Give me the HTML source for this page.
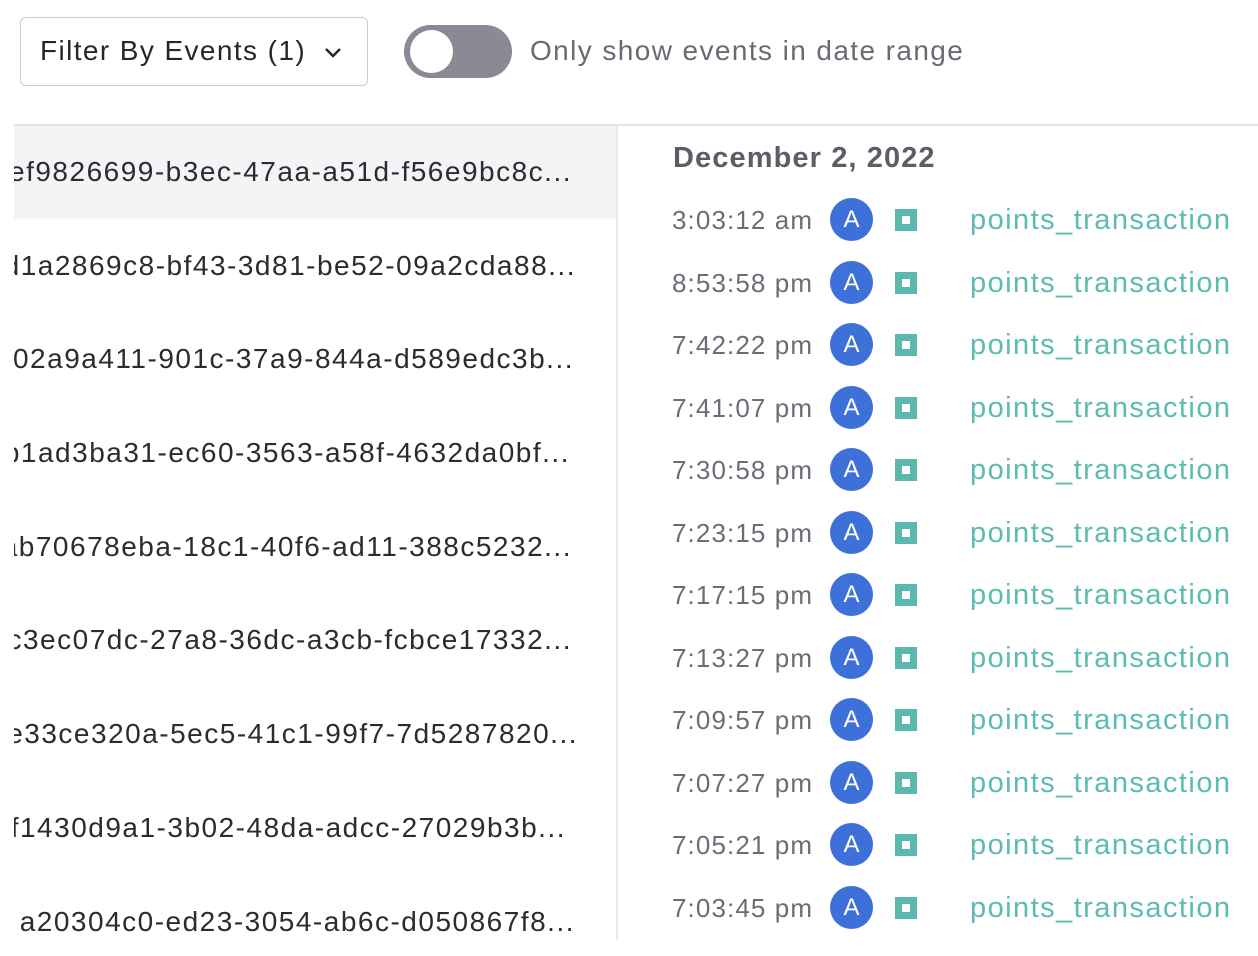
<!DOCTYPE html>
<html><head><meta charset="utf-8"><style>
body{margin:0;width:1258px;height:956px;background:#fff;font-family:"Liberation Sans",sans-serif;position:relative;overflow:hidden}
.btn{position:absolute;left:20px;top:17px;width:348px;height:69px;border:1.5px solid #c9cbd0;border-radius:6px;box-sizing:border-box}
.btn span{position:absolute;left:19px;top:17px;font-size:28px;color:#25272c;letter-spacing:1.4px;white-space:nowrap}
.btn svg{position:absolute;left:302px;top:28px}
.tog{position:absolute;left:404px;top:25px;width:108px;height:53px;border-radius:27px;background:#898a93}
.tog i{position:absolute;left:6px;top:5px;width:43px;height:43px;border-radius:50%;background:#fff}
.lbl{position:absolute;left:530px;top:35px;font-size:28px;color:#686b74;letter-spacing:1.4px;white-space:nowrap}
.hl{position:absolute;left:14px;top:124px;width:1244px;height:2px;background:#e3e4e8}
.vl{position:absolute;left:616px;top:124px;width:2px;height:816px;background:#e8e9ec}
.left{position:absolute;left:14px;top:126px;width:602px;height:830px;overflow:hidden}
.row{position:absolute;left:0;width:602px;height:93px}
.row span{position:absolute;right:44px;font-size:28px;color:#2a2c31;white-space:nowrap;letter-spacing:1.5px}
.date{position:absolute;left:673px;top:142px;font-size:29px;font-weight:bold;color:#5b5e67;letter-spacing:1.1px}
.ev{position:absolute;left:0;width:1258px;height:44px}
.ev .t{position:absolute;left:672px;top:7px;font-size:26px;color:#6a6d76;letter-spacing:1.1px}
.ev .a{position:absolute;left:830px;top:0;width:43px;height:43px;border-radius:50%;background:#3e70da;color:#fff;font-size:24px;text-align:center;line-height:43px}
.ev .s{position:absolute;left:895px;top:11px;width:22px;height:22px;background:#5ab8ae}
.ev .s i{position:absolute;left:7px;top:7px;width:8px;height:8px;background:#fff}
.ev .n{position:absolute;left:970px;top:6px;font-size:29px;color:#5cbcb1;letter-spacing:1.45px;white-space:nowrap}
</style></head><body>
<div class="btn"><span>Filter By Events (1)</span><svg width="20" height="14" viewBox="0 0 20 14"><path d="M3 3 L10 10 L17 3" fill="none" stroke="#25272c" stroke-width="2.5"/></svg></div>
<div class="tog"><i></i></div>
<div class="lbl">Only show events in date range</div>
<div class="hl"></div>
<div class="vl"></div>
<div class="left">
<div class="row" style="top:0;background:#f3f4f6"><span style="top:30px">ef9826699-b3ec-47aa-a51d-f56e9bc8c...</span></div>
<div class="row" style="top:94px"><span style="top:30px;right:40px">d1a2869c8-bf43-3d81-be52-09a2cda88...</span></div>
<div class="row" style="top:187px"><span style="top:30px;right:42px">5e02a9a411-901c-37a9-844a-d589edc3b...</span></div>
<div class="row" style="top:281px"><span style="top:30px;right:46px">b1ad3ba31-ec60-3563-a58f-4632da0bf...</span></div>
<div class="row" style="top:375px"><span style="top:30px;right:44px">ab70678eba-18c1-40f6-ad11-388c5232...</span></div>
<div class="row" style="top:468px"><span style="top:30px;right:44px">c3ec07dc-27a8-36dc-a3cb-fcbce17332...</span></div>
<div class="row" style="top:562px"><span style="top:30px;right:38px">e33ce320a-5ec5-41c1-99f7-7d5287820...</span></div>
<div class="row" style="top:656px"><span style="top:30px;right:50px">f1430d9a1-3b02-48da-adcc-27029b3b...</span></div>
<div class="row" style="top:750px"><span style="top:30px;right:41px">a20304c0-ed23-3054-ab6c-d050867f8...</span></div>
</div>
<div class="date">December 2, 2022</div>
<div class="ev" style="top:198px"><span class="t">3:03:12 am</span><span class="a">A</span><span class="s"><i></i></span><span class="n">points_transaction</span></div>
<div class="ev" style="top:261px"><span class="t">8:53:58 pm</span><span class="a">A</span><span class="s"><i></i></span><span class="n">points_transaction</span></div>
<div class="ev" style="top:323px"><span class="t">7:42:22 pm</span><span class="a">A</span><span class="s"><i></i></span><span class="n">points_transaction</span></div>
<div class="ev" style="top:386px"><span class="t">7:41:07 pm</span><span class="a">A</span><span class="s"><i></i></span><span class="n">points_transaction</span></div>
<div class="ev" style="top:448px"><span class="t">7:30:58 pm</span><span class="a">A</span><span class="s"><i></i></span><span class="n">points_transaction</span></div>
<div class="ev" style="top:511px"><span class="t">7:23:15 pm</span><span class="a">A</span><span class="s"><i></i></span><span class="n">points_transaction</span></div>
<div class="ev" style="top:573px"><span class="t">7:17:15 pm</span><span class="a">A</span><span class="s"><i></i></span><span class="n">points_transaction</span></div>
<div class="ev" style="top:636px"><span class="t">7:13:27 pm</span><span class="a">A</span><span class="s"><i></i></span><span class="n">points_transaction</span></div>
<div class="ev" style="top:698px"><span class="t">7:09:57 pm</span><span class="a">A</span><span class="s"><i></i></span><span class="n">points_transaction</span></div>
<div class="ev" style="top:761px"><span class="t">7:07:27 pm</span><span class="a">A</span><span class="s"><i></i></span><span class="n">points_transaction</span></div>
<div class="ev" style="top:823px"><span class="t">7:05:21 pm</span><span class="a">A</span><span class="s"><i></i></span><span class="n">points_transaction</span></div>
<div class="ev" style="top:886px"><span class="t">7:03:45 pm</span><span class="a">A</span><span class="s"><i></i></span><span class="n">points_transaction</span></div>
</body></html>
